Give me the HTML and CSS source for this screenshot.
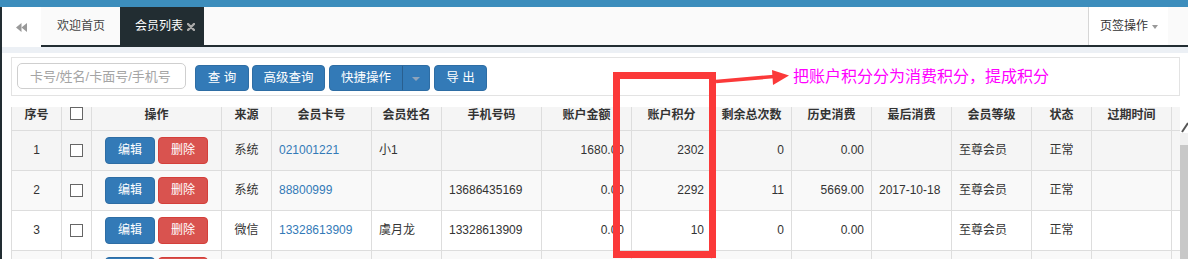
FILE: index.html
```html
<!DOCTYPE html>
<html lang="zh-CN">
<head>
<meta charset="utf-8">
<title>会员列表</title>
<link rel="stylesheet" href="styles.css">
</head>
<body>
<div class="topbar"></div>
<div class="main">
  <div class="edge"></div>
  <div class="content">
    <div class="tabbar">
      <div class="tab-back">
        <svg width="11" height="9" viewBox="0 0 11 9"><polygon points="0,4.5 5.5,0 5.5,9" fill="#999"/><polygon points="5.5,4.5 11,0 11,9" fill="#999"/></svg>
      </div>
      <div class="tab-strip">
        <div class="tab">欢迎首页</div>
        <div class="tab active">会员列表<svg class="close" width="8" height="8" viewBox="0 0 8 8"><path d="M1 1 L7 7 M7 1 L1 7" stroke="#a9a9a9" stroke-width="2.4" stroke-linecap="round"/></svg></div>
        <div class="spacer"></div>
        <div class="tab-ops">页签操作<span class="caret"></span></div>
        <div class="tail"></div>
      </div>
    </div>
    <div class="gap"></div>
    <div class="panel">
      <div class="toolbar">
        <input class="search" type="text" placeholder="卡号/姓名/卡面号/手机号">
        <button class="btn b-query">查 询</button>
        <button class="btn b-adv">高级查询</button>
        <div class="btn-group">
          <button class="btn b-quick">快捷操作</button>
          <button class="btn b-drop"><span class="caret-btn"></span></button>
        </div>
        <button class="btn b-export">导 出</button>
      </div>
      <div class="table-wrap">
        <table class="grid">
          <colgroup>
            <col class="c50"><col class="c30"><col class="c130"><col class="c50"><col class="c100"><col class="c70"><col class="c100"><col class="c90"><col class="c80"><col class="c80"><col class="c80"><col class="c80"><col class="c80"><col class="c60"><col class="c80"><col class="c80">
          </colgroup>
          <thead>
            <tr>
              <th>序号</th><th><input class="chk" type="checkbox"></th><th>操作</th><th>来源</th><th>会员卡号</th><th>会员姓名</th><th>手机号码</th><th>账户金额</th><th>账户积分</th><th>剩余总次数</th><th>历史消费</th><th>最后消费</th><th>会员等级</th><th>状态</th><th>过期时间</th><th></th>
            </tr>
          </thead>
          <tbody>
            <tr class="r-hover">
              <td class="ctr">1</td><td class="ctr"><input class="chk" type="checkbox"></td>
              <td class="ctr ops"><button class="sbtn edit">编辑</button><button class="sbtn del">删除</button></td>
              <td class="ctr">系统</td><td><a class="lnk">021001221</a></td><td>小1</td><td></td>
              <td class="num">1680.00</td><td class="num">2302</td><td class="num">0</td><td class="num">0.00</td><td></td><td>至尊会员</td><td class="ctr">正常</td><td></td><td></td>
            </tr>
            <tr class="r-odd">
              <td class="ctr">2</td><td class="ctr"><input class="chk" type="checkbox"></td>
              <td class="ctr ops"><button class="sbtn edit">编辑</button><button class="sbtn del">删除</button></td>
              <td class="ctr">系统</td><td><a class="lnk">88800999</a></td><td></td><td>13686435169</td>
              <td class="num">0.00</td><td class="num">2292</td><td class="num">11</td><td class="num">5669.00</td><td>2017-10-18</td><td>至尊会员</td><td class="ctr">正常</td><td></td><td></td>
            </tr>
            <tr class="r-even">
              <td class="ctr">3</td><td class="ctr"><input class="chk" type="checkbox"></td>
              <td class="ctr ops"><button class="sbtn edit">编辑</button><button class="sbtn del">删除</button></td>
              <td class="ctr">微信</td><td><a class="lnk">13328613909</a></td><td>虞月龙</td><td>13328613909</td>
              <td class="num">0.00</td><td class="num">10</td><td class="num">0</td><td class="num">0.00</td><td></td><td>至尊会员</td><td class="ctr">正常</td><td></td><td></td>
            </tr>
            <tr class="r-odd">
              <td class="ctr"></td><td class="ctr"></td>
              <td class="ctr ops"><span class="sbtn edit stub"></span><span class="sbtn del stub"></span></td>
              <td></td><td></td><td></td><td></td><td></td><td></td><td></td><td></td><td></td><td></td><td></td><td></td><td></td>
            </tr>
          </tbody>
        </table>
      </div>
      <div class="scrollbar">
        <div class="sb-arrow"><svg width="8" height="11" viewBox="0 0 8 11"><path d="M2 10 L8 1" stroke="#555" stroke-width="2"/></svg></div>
        <div class="sb-track"></div>
        <div class="sb-thumb"></div>
      </div>
    </div>
  </div>
</div>
<div class="annot-box"></div>
<svg class="annot-arrow" width="80" height="24" viewBox="0 0 80 24">
  <path d="M2 15.5 L60 10.5" stroke="#fb3939" stroke-width="3.6"/>
  <polygon points="58,4 75,9.5 59,19" fill="#fb3939"/>
</svg>
<div class="annot-text">把账户积分分为消费积分，提成积分</div>
</body>
</html>
```

FILE: styles.css
```css
* { box-sizing: border-box; }
html, body { margin: 0; padding: 0; }
body {
  width: 1188px;
  height: 259px;
  overflow: hidden;
  position: relative;
  background: #fff;
  font-family: "Liberation Sans", "Noto Sans CJK SC", sans-serif;
  font-size: 12px;
  line-height: 17px;
  color: #333;
}
.topbar { height: 7px; background: #3c8dbc; }
.main { display: flex; height: 252px; }
.edge { width: 2px; flex: none; background: #222d32; }
.content { flex: 1; min-width: 0; display: flex; flex-direction: column; }

.tabbar { display: flex; height: 40px; flex: none; }
.tab-back { width: 39px; flex: none; background: #fff; display: flex; align-items: center; justify-content: center; padding-top: 1px; }
.tab-strip { flex: 1; display: flex; background: #fafafa; border-bottom: 2px solid #222d32; }
.tab { display: flex; align-items: center; padding: 0 15px 0 16px; color: #444; }
.tab.active { background: #222d32; color: #fff; padding: 0 9px 0 15px; }
.tab .close { margin-left: 4px; margin-top: 1px; }
.spacer { flex: 1; }
.tab-ops { width: 80px; flex: none; background: #fff; border-left: 1px solid #d6d6d6; display: flex; align-items: center; padding-left: 11px; color: #333; }
.caret { width: 0; height: 0; border-left: 3.5px solid transparent; border-right: 3.5px solid transparent; border-top: 4px solid #999; margin-left: 4px; margin-top: 1px; }
.tail { width: 20px; flex: none; }

.gap { height: 6px; flex: none; background: #ecf0f5; }
.panel { flex: 1; min-height: 0; position: relative; background: #fff; padding: 4px 8px 0 9px; }

.toolbar { height: 39px; border: 1px solid #e3e3e3; display: flex; align-items: flex-start; padding: 5px; }
.search {
  width: 169px; height: 26px; margin: 0;
  border: 1px solid #cfcfcf; border-radius: 5px;
  padding: 0 0 0 12px;
  font-family: "Liberation Sans", "Noto Sans CJK SC", sans-serif;
  font-size: 13px; color: #333; outline: none; background: #fff;
}
.search::placeholder { color: #a5a5a5; }
.btn {
  height: 26px; margin: 2px 0 0 0; padding: 0;
  border: 1px solid #2e6da4; border-radius: 4px;
  background: #337ab7; color: #fff;
  font-family: "Liberation Sans", "Noto Sans CJK SC", sans-serif;
  font-size: 12.5px; line-height: 17px;
  display: flex; align-items: center; justify-content: center;
}
.b-query { width: 54px; margin-left: 9px; }
.b-adv { width: 73px; margin-left: 3px; }
.btn-group { display: flex; margin-left: 4px; }
.b-quick { width: 74px; border-radius: 4px 0 0 4px; }
.b-drop { width: 28px; margin-left: -1px; border-radius: 0 4px 4px 0; border-left-color: #295f8f; }
.caret-btn { width: 0; height: 0; border-left: 4px solid transparent; border-right: 4px solid transparent; border-top: 4px solid #8ea3bb; margin-top: 1px; }
.b-export { width: 53px; margin-left: 4px; }

.table-wrap { margin-top: 11px; height: 160px; overflow: hidden; }
.grid { border-collapse: collapse; table-layout: fixed; width: 1240px; }
.c30 { width: 30px; } .c50 { width: 50px; } .c60 { width: 60px; } .c70 { width: 70px; }
.c80 { width: 80px; } .c90 { width: 90px; } .c100 { width: 100px; } .c130 { width: 130px; }
.grid th {
  height: 23px; padding: 0 2px; vertical-align: top; text-align: center;
  font-weight: bold; color: #333; background: #f5f5f5;
  border: 1px solid #ddd; border-top: 0;
  white-space: nowrap; overflow: hidden;
}
.grid td {
  height: 40px; padding: 0 7px; vertical-align: middle;
  border: 1px solid #ddd; white-space: nowrap; overflow: hidden;
}
.grid td.ctr { text-align: center; }
.grid td.num { text-align: right; }
.grid td.ops { padding: 0; }
.r-hover td { background: #f5f5f5; }
.r-odd td { background: #f9f9f9; }
.r-even td { background: #fff; }
.lnk { color: #337ab7; text-decoration: none; }
.chk {
  -webkit-appearance: none; appearance: none;
  width: 13px; height: 13px; margin: 0; padding: 0;
  border: 1px solid #666; background: #fff; border-radius: 0;
  vertical-align: middle; display: inline-block;
}
th .chk { margin-top: 0; vertical-align: top; }
.sbtn {
  width: 50px; height: 27px; margin: 0; padding: 0;
  border-radius: 4px; color: #fff;
  font-family: "Liberation Sans", "Noto Sans CJK SC", sans-serif;
  font-size: 12px; line-height: 17px; vertical-align: middle;
}
.sbtn + .sbtn { margin-left: 3px; }
.sbtn.stub { display: inline-block; }
.edit { background: #337ab7; border: 1px solid #2e6da4; }
.del { background: #d9534f; border: 1px solid #d43f3a; }

.scrollbar { position: absolute; right: 0; top: 69px; bottom: 0; width: 8px; display: flex; flex-direction: column; }
.sb-arrow { height: 11px; flex: none; background: #fff; }
.sb-arrow svg { display: block; }
.sb-track { height: 12px; flex: none; background: #f0f0f0; }
.sb-thumb { flex: 1; background: #c8c8c8; }

.annot-box { position: absolute; left: 613px; top: 72px; width: 103px; height: 186px; border: 7px solid #fb3939; }
.annot-arrow { position: absolute; left: 714px; top: 66px; }
.annot-text { position: absolute; left: 793px; top: 66px; font-size: 16px; line-height: 18px; color: #ff00ff; white-space: nowrap; font-family: "Noto Sans CJK SC", sans-serif; }
```
